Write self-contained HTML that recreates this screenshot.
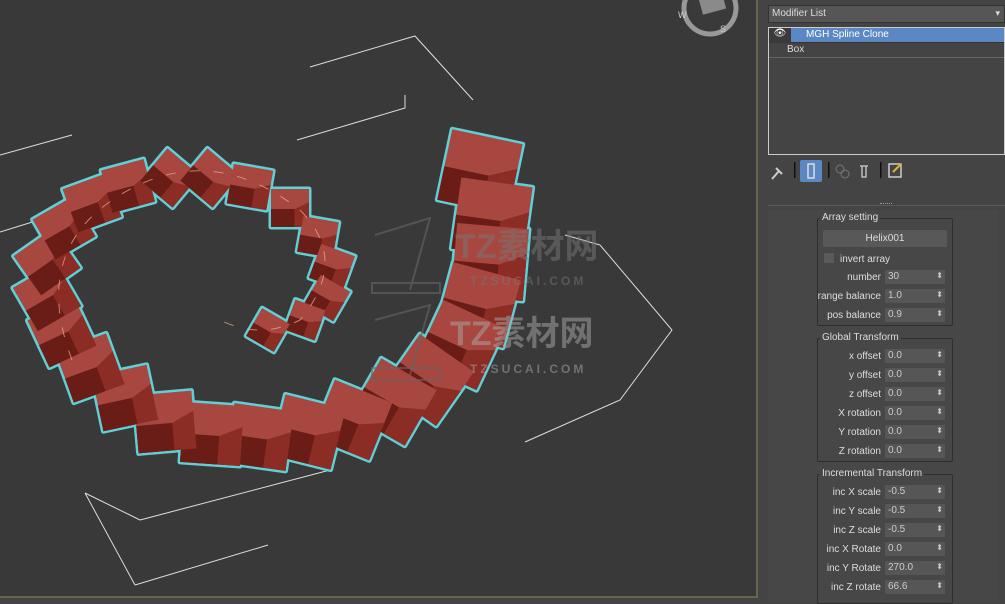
<!DOCTYPE html>
<html><head><meta charset="utf-8"><style>
*{margin:0;padding:0;box-sizing:border-box}
body{width:1005px;height:602px;background:#444;overflow:hidden;position:relative;font-family:"Liberation Sans","Noto Sans CJK SC",sans-serif;font-size:10px;color:#ddd}
#vp{position:absolute;left:0;top:0;width:758px;height:598px;background:#393939;border-right:2px solid #6b6450;border-bottom:2px solid #6b6450}
#panel{position:absolute;left:762px;top:0;width:243px;height:602px;background:#444}
.ml{position:absolute;left:6px;top:5px;width:237px;height:18px;background:#565656;border:1px solid #333;padding:2px 3px;color:#ddd}
.ml:after{content:"▾";position:absolute;right:4px;top:2px;font-size:9px}
.stack{position:absolute;left:6px;top:27px;width:237px;height:128px;background:#444;border:1px solid #ccc}
.row1{height:15px;background:#5b87c3;color:#fff;padding:1px 0 0 37px;border-bottom:1px solid #333}
.eye{position:absolute;left:0;top:0;width:22px;height:15px;background:#3a3a3a;color:#fff;text-align:center;font-size:10px}
.row2{height:15px;padding:1px 0 0 18px;border-bottom:1px solid #666}
.sep{position:absolute;left:6px;top:205px;width:237px;border-top:1px solid #5a5a5a}
.grp{position:absolute;left:55px;width:136px;border:1px solid #2e2e2e;border-radius:2px}
.gt{position:absolute;left:2px;top:-7px;background:#474747;padding:0 2px;color:#ddd}
.f{position:absolute;left:0;width:136px;height:15px}
.f span{position:absolute;right:73px;top:2px;white-space:nowrap;text-align:right}
.f i{position:absolute;left:67px;top:0;width:60px;height:14px;background:#565656;font-style:normal;padding:1px 3px;color:#ccc}
.f i:after{content:"⬍";position:absolute;right:2px;top:1px;font-size:8px}
</style></head><body>
<div id="vp">
<svg width="758" height="598" style="position:absolute;left:0;top:0">
<defs>
<g id="cube">
<polygon points="-1,-1 1,-1 1,1 -1,1" fill="#a8473f" vector-effect="non-scaling-stroke"/>
<polygon points="-1,0.05 0.25,0.05 0.25,1 -1,1" fill="#6a1c16" stroke="none"/>
<polygon points="0.25,0.05 1,-0.3 1,1 0.25,1" fill="#8b2c25" stroke="none"/>
</g>
<g id="chain">
<use href="#cube" transform="translate(480,172) rotate(12) scale(36)"/>
<use href="#cube" transform="translate(492,218) rotate(8) scale(36)"/>
<use href="#cube" transform="translate(490,262) rotate(5) scale(36)"/>
<use href="#cube" transform="translate(478,305) rotate(15) scale(35)"/>
<use href="#cube" transform="translate(460,345) rotate(25) scale(34)"/>
<use href="#cube" transform="translate(428,380) rotate(35) scale(33)"/>
<use href="#cube" transform="translate(393,402) rotate(30) scale(32)"/>
<use href="#cube" transform="translate(352,420) rotate(22) scale(31)"/>
<use href="#cube" transform="translate(308,432) rotate(14) scale(31)"/>
<use href="#cube" transform="translate(260,437) rotate(8) scale(30)"/>
<use href="#cube" transform="translate(212,434) rotate(4) scale(30)"/>
<use href="#cube" transform="translate(165,422) rotate(-5) scale(29)"/>
<use href="#cube" transform="translate(125,398) rotate(-12) scale(28)"/>
<use href="#cube" transform="translate(90,368) rotate(-20) scale(27)"/>
<use href="#cube" transform="translate(62,333) rotate(-25) scale(26)"/>
<use href="#cube" transform="translate(47,297) rotate(-30) scale(25)"/>
<use href="#cube" transform="translate(47,262) rotate(-35) scale(24)"/>
<use href="#cube" transform="translate(64,228) rotate(-30) scale(23)"/>
<use href="#cube" transform="translate(92,203) rotate(-20) scale(23)"/>
<use href="#cube" transform="translate(128,186) rotate(-15) scale(22)"/>
<use href="#cube" transform="translate(170,178) rotate(40) scale(21)"/>
<use href="#cube" transform="translate(210,178) rotate(40) scale(21)"/>
<use href="#cube" transform="translate(250,187) rotate(10) scale(20)"/>
<use href="#cube" transform="translate(290,208) rotate(0) scale(19)"/>
<use href="#cube" transform="translate(318,237) rotate(10) scale(18)"/>
<use href="#cube" transform="translate(332,267) rotate(20) scale(18)"/>
<use href="#cube" transform="translate(327,298) rotate(30) scale(17)"/>
<use href="#cube" transform="translate(305,320) rotate(20) scale(16)"/>
<use href="#cube" transform="translate(268,330) rotate(30) scale(16)"/>
</g>
</defs>
<g stroke="#ddd" stroke-width="1" fill="none">
<path d="M310 67L415 36L473 100M297 140L405 108L405 95M0 155L72 135M0 232L55 215M600 245L672 330L620 400L525 442M140 520L85 493M140 520L330 470M135 585L268 545M85 493L135 585M600 245L565 235"/>
</g>
<g style="stroke:#5fd0d6;stroke-width:5;stroke-linejoin:round"><use href="#chain"/></g>
<use href="#chain" style="stroke:none"/>
<path d="M72 360Q30 250 120 195T300 210Q350 260 300 320Q260 340 220 320" stroke="#e8b090" stroke-width="1" fill="none" stroke-dasharray="10 14" opacity=".7"/>
<g fill="#777" opacity=".5" font-weight="bold">
<text x="455" y="258" font-size="34">TZ素材网</text>
<text x="470" y="285" font-size="12" letter-spacing="3">TZSUCAI.COM</text>
<text x="450" y="345" font-size="34" fill="#aaa">TZ素材网</text>
<text x="470" y="373" font-size="12" letter-spacing="3" fill="#aaa">TZSUCAI.COM</text>
</g>
<g stroke="#666" stroke-width="2" fill="none" opacity=".6">
<path d="M375 235L430 218L410 290M372 283L440 283L440 293L372 293Z"/>
<path d="M375 320L430 305L410 375M372 368L440 368L440 380L372 380Z"/>
</g>
<circle cx="710" cy="8" r="26" fill="none" stroke="#999" stroke-width="5"/>
<circle cx="710" cy="8" r="20" fill="#3a3a3a"/>
<rect x="700" y="-8" width="24" height="20" fill="#8a8a8a" transform="rotate(-15 712 2)"/>
<text x="678" y="18" fill="#ccc" font-size="9">W</text>
<text x="720" y="32" fill="#ccc" font-size="9">S</text>
</svg>
</div>
<div id="panel">
<div class="ml">Modifier List</div>
<div class="stack"><div style="position:relative" class="row1"><div class="eye">👁</div>MGH Spline Clone</div><div class="row2">Box</div></div>
<svg width="243" height="30" style="position:absolute;left:0;top:157px">
<path d="M10 22L17 14M14 11L20 17" stroke="#ccc" stroke-width="2"/>
<rect x="32" y="5" width="1.5" height="16" fill="#111"/>
<rect x="38" y="3" width="22" height="22" rx="2" fill="#5b87c3"/>
<rect x="46" y="7" width="6" height="14" fill="none" stroke="#ddd" stroke-width="1.5"/>
<rect x="66" y="5" width="1.5" height="16" fill="#111"/>
<circle cx="78" cy="12" r="4" fill="none" stroke="#777"/><circle cx="83" cy="17" r="4" fill="none" stroke="#777"/>
<path d="M98 9h8M100 9v11h4V9" stroke="#bbb" fill="none" stroke-width="1.5"/>
<rect x="118" y="5" width="1.5" height="16" fill="#111"/>
<rect x="127" y="7" width="12" height="13" fill="none" stroke="#ccc" stroke-width="1.5"/><path d="M131 15l8-8" stroke="#e0b030" stroke-width="2"/>
</svg>
<div class="sep"></div>
<div style="position:absolute;left:118px;top:203px;width:12px;border-top:1px dotted #999"></div>
<div style="position:absolute;left:6px;top:210px;width:230px;height:392px;background:#474747"></div>
<div class="grp" style="top:218px;height:108px"><div class="gt">Array setting</div>
<div style="position:absolute;left:5px;top:11px;width:124px;height:17px;background:#585858;border-radius:2px;text-align:center;padding-top:3px">Helix001</div>
<div style="position:absolute;left:6px;top:34px;width:10px;height:10px;background:#5a5a5a"></div><div style="position:absolute;left:22px;top:35px">invert array</div>
<div class="f" style="top:51px"><span>number</span><i>30</i></div>
<div class="f" style="top:70px"><span>range balance</span><i>1.0</i></div>
<div class="f" style="top:89px"><span>pos balance</span><i>0.9</i></div>
</div>
<div class="grp" style="top:338px;height:124px"><div class="gt">Global Transform</div>
<div class="f" style="top:10px"><span>x offset</span><i>0.0</i></div>
<div class="f" style="top:29px"><span>y offset</span><i>0.0</i></div>
<div class="f" style="top:48px"><span>z offset</span><i>0.0</i></div>
<div class="f" style="top:67px"><span>X rotation</span><i>0.0</i></div>
<div class="f" style="top:86px"><span>Y rotation</span><i>0.0</i></div>
<div class="f" style="top:105px"><span>Z rotation</span><i>0.0</i></div>
</div>
<div class="grp" style="top:474px;height:130px"><div class="gt">Incremental Transform</div>
<div class="f" style="top:10px"><span>inc X scale</span><i>-0.5</i></div>
<div class="f" style="top:29px"><span>inc Y scale</span><i>-0.5</i></div>
<div class="f" style="top:48px"><span>inc Z scale</span><i>-0.5</i></div>
<div class="f" style="top:67px"><span>inc X Rotate</span><i>0.0</i></div>
<div class="f" style="top:86px"><span>inc Y Rotate</span><i>270.0</i></div>
<div class="f" style="top:105px"><span>inc Z rotate</span><i>66.6</i></div>
</div>
</div>
</body></html>
